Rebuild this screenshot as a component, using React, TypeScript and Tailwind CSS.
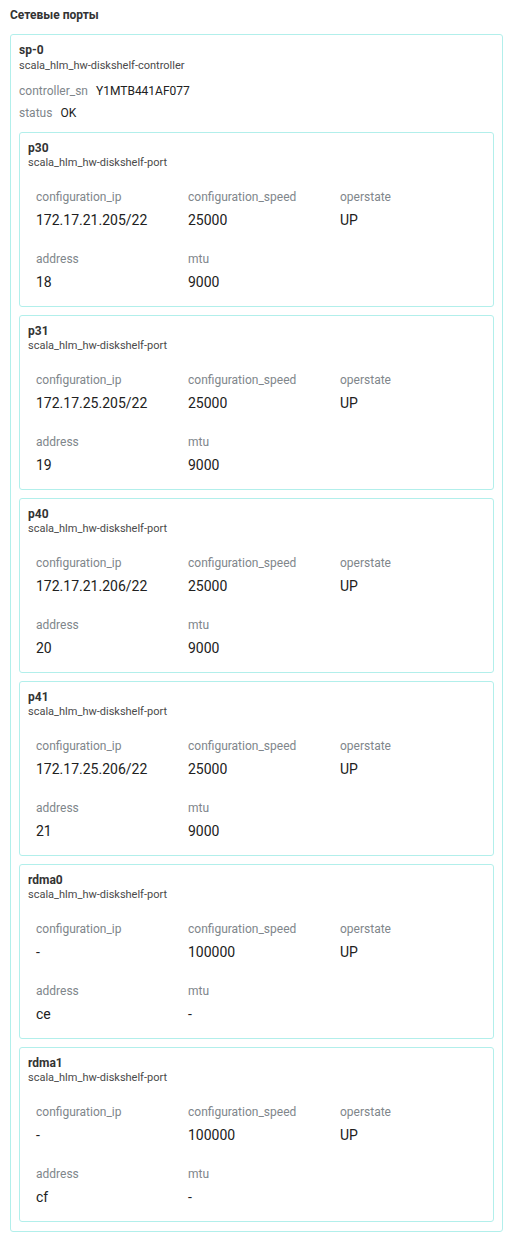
const ports = [
  { name: "p30", ip: "172.17.21.205/22", speed: "25000", state: "UP", address: "18", mtu: "9000" },
  { name: "p31", ip: "172.17.25.205/22", speed: "25000", state: "UP", address: "19", mtu: "9000" },
  { name: "p40", ip: "172.17.21.206/22", speed: "25000", state: "UP", address: "20", mtu: "9000" },
  { name: "p41", ip: "172.17.25.206/22", speed: "25000", state: "UP", address: "21", mtu: "9000" },
  { name: "rdma0", ip: "-", speed: "100000", state: "UP", address: "ce", mtu: "-" },
  { name: "rdma1", ip: "-", speed: "100000", state: "UP", address: "cf", mtu: "-" },
];

function Field({ label, value }: { label: string; value: string }) {
  return (
    <div className="flex flex-col gap-[5px]">
      <span className="text-[12px] leading-[16px] text-[#80868b]">{label}</span>
      <span className="text-[14px] leading-[20px] text-[#212121]">{value}</span>
    </div>
  );
}

export default function App() {
  return (
    <div className="min-h-screen bg-white px-[10px] pt-[7px] pb-[10px] font-['Roboto',sans-serif]">
      <h2 className="text-[12px] leading-[16px] font-bold text-[#333]">Сетевые порты</h2>

      {/* Controller */}
      <div className="mt-[11px] rounded-[3px] border border-[#b2efeb] px-2 pt-[7px] pb-[9px]">
        <div className="text-[12px] leading-[16px] font-bold text-[#333]">sp-0</div>
        <div className="mt-[1px] text-[11px] leading-[13px] text-[#4a4a4a]">scala_hlm_hw-diskshelf-controller</div>

        <div className="mt-[11px] flex items-center gap-2 text-[12px] leading-[16px]">
          <span className="text-[#80868b]">controller_sn</span>
          <span className="text-[#212121]">Y1MTB441AF077</span>
        </div>
        <div className="mt-[6px] flex items-center gap-2 text-[12px] leading-[16px]">
          <span className="text-[#80868b]">status</span>
          <span className="text-[#212121]">OK</span>
        </div>

        <div className="mt-[11px] flex flex-col gap-[8px]">
          {ports.map((p) => (
            <div key={p.name} className="rounded-[3px] border border-[#b2efeb] px-2 pt-[8px] pb-[14px]">
              <div className="text-[12px] leading-[14px] font-bold text-[#333]">{p.name}</div>
              <div className="mt-[1px] text-[11px] leading-[13px] text-[#4a4a4a]">scala_hlm_hw-diskshelf-port</div>
              <div className="mt-[20px] grid grid-cols-[152px_152px_1fr] gap-y-[21px] pl-2">
                <Field label="configuration_ip" value={p.ip} />
                <Field label="configuration_speed" value={p.speed} />
                <Field label="operstate" value={p.state} />
                <Field label="address" value={p.address} />
                <Field label="mtu" value={p.mtu} />
              </div>
            </div>
          ))}
        </div>
      </div>
    </div>
  );
}
